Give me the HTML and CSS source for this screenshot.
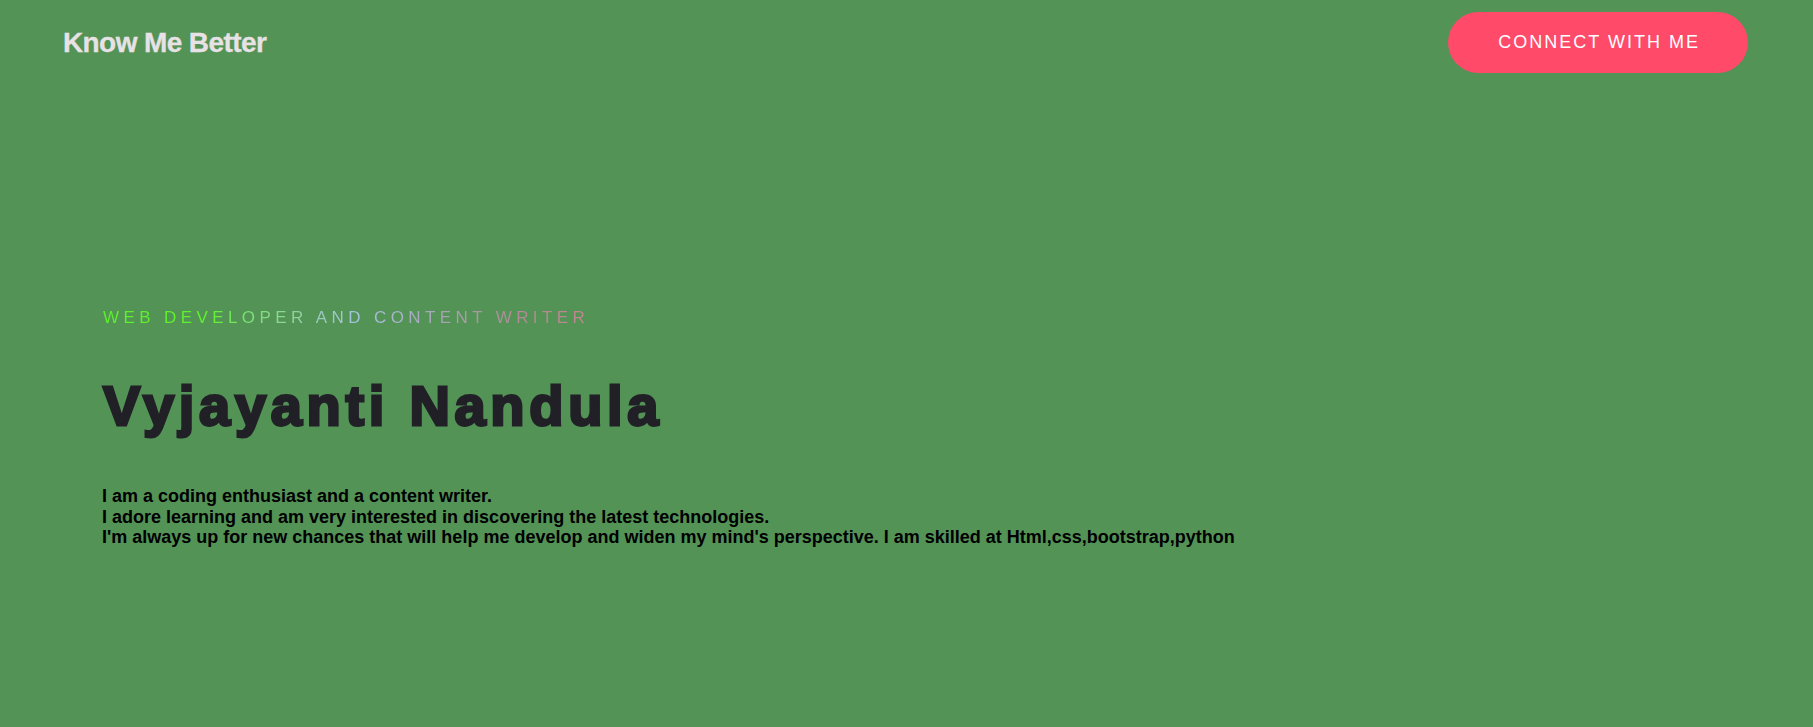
FILE: index.html
```html
<!DOCTYPE html>
<html lang="en">
<head>
<meta charset="utf-8">
<title>Know Me Better</title>
<link rel="stylesheet" href="styles.css">
</head>
<body>
<header class="nav">
  <a class="brand" href="#">Know Me Better</a>
  <a class="cta" href="#">CONNECT WITH ME</a>
</header>
<section class="hero">
  <p class="tagline"><span class="tagline-text">WEB DEVELOPER AND CONTENT WRITER</span></p>
  <h1 class="name">Vyjayanti Nandula</h1>
  <p class="bio">I am a coding enthusiast and a content writer.<br>I adore learning and am very interested in discovering the latest technologies.<br>I'm always up for new chances that will help me develop and widen my mind's perspective. I am skilled at Html,css,bootstrap,python</p>
</section>
</body>
</html>
```
FILE: styles.css
```css
html, body {
  margin: 0;
  padding: 0;
}
body {
  background: #549356;
  font-family: "Liberation Sans", Arial, sans-serif;
  min-height: 727px;
}
.nav {
  display: flex;
  justify-content: space-between;
  align-items: center;
  padding: 12px 65px 0 63px;
}
.brand {
  font-size: 28px;
  font-weight: bold;
  letter-spacing: -0.6px;
  line-height: 32px;
  color: #e8e2e6;
  text-decoration: none;
  -webkit-text-stroke: 0.3px #e8e2e6;
}
.cta {
  display: block;
  background: #ff4a6a;
  color: #ffffff;
  font-size: 18px;
  letter-spacing: 2px;
  line-height: 21px;
  padding: 20px 48px 20px 50px;
  border-radius: 31px;
  text-decoration: none;
}
.hero {
  padding: 235px 0 0 103px;
}
.tagline {
  margin: 0;
  font-size: 17px;
  line-height: 20px;
  letter-spacing: 4.4px;
}
.tagline-text {
  background: linear-gradient(to right, #5cf02c 0%, #62f230 22%, #7ee078 30%, #8cd696 38%, #9cc8c0 45%, #a6c4e0 52%, #a8b8d2 58%, #a8a6b8 68%, #a8969f 78%, #b08a96 86%, #bf8690 100%);
  -webkit-background-clip: text;
  background-clip: text;
  color: transparent;
}
.name {
  margin: 44px 0 0 0;
  font-size: 56px;
  line-height: 67px;
  font-weight: bold;
  letter-spacing: 4.7px;
  color: #212027;
  -webkit-text-stroke: 2.8px #212027;
}
.bio {
  margin: 47px 0 0 -1px;
  font-size: 18px;
  line-height: 20.7px;
  font-weight: bold;
  color: #000000;
}
```
